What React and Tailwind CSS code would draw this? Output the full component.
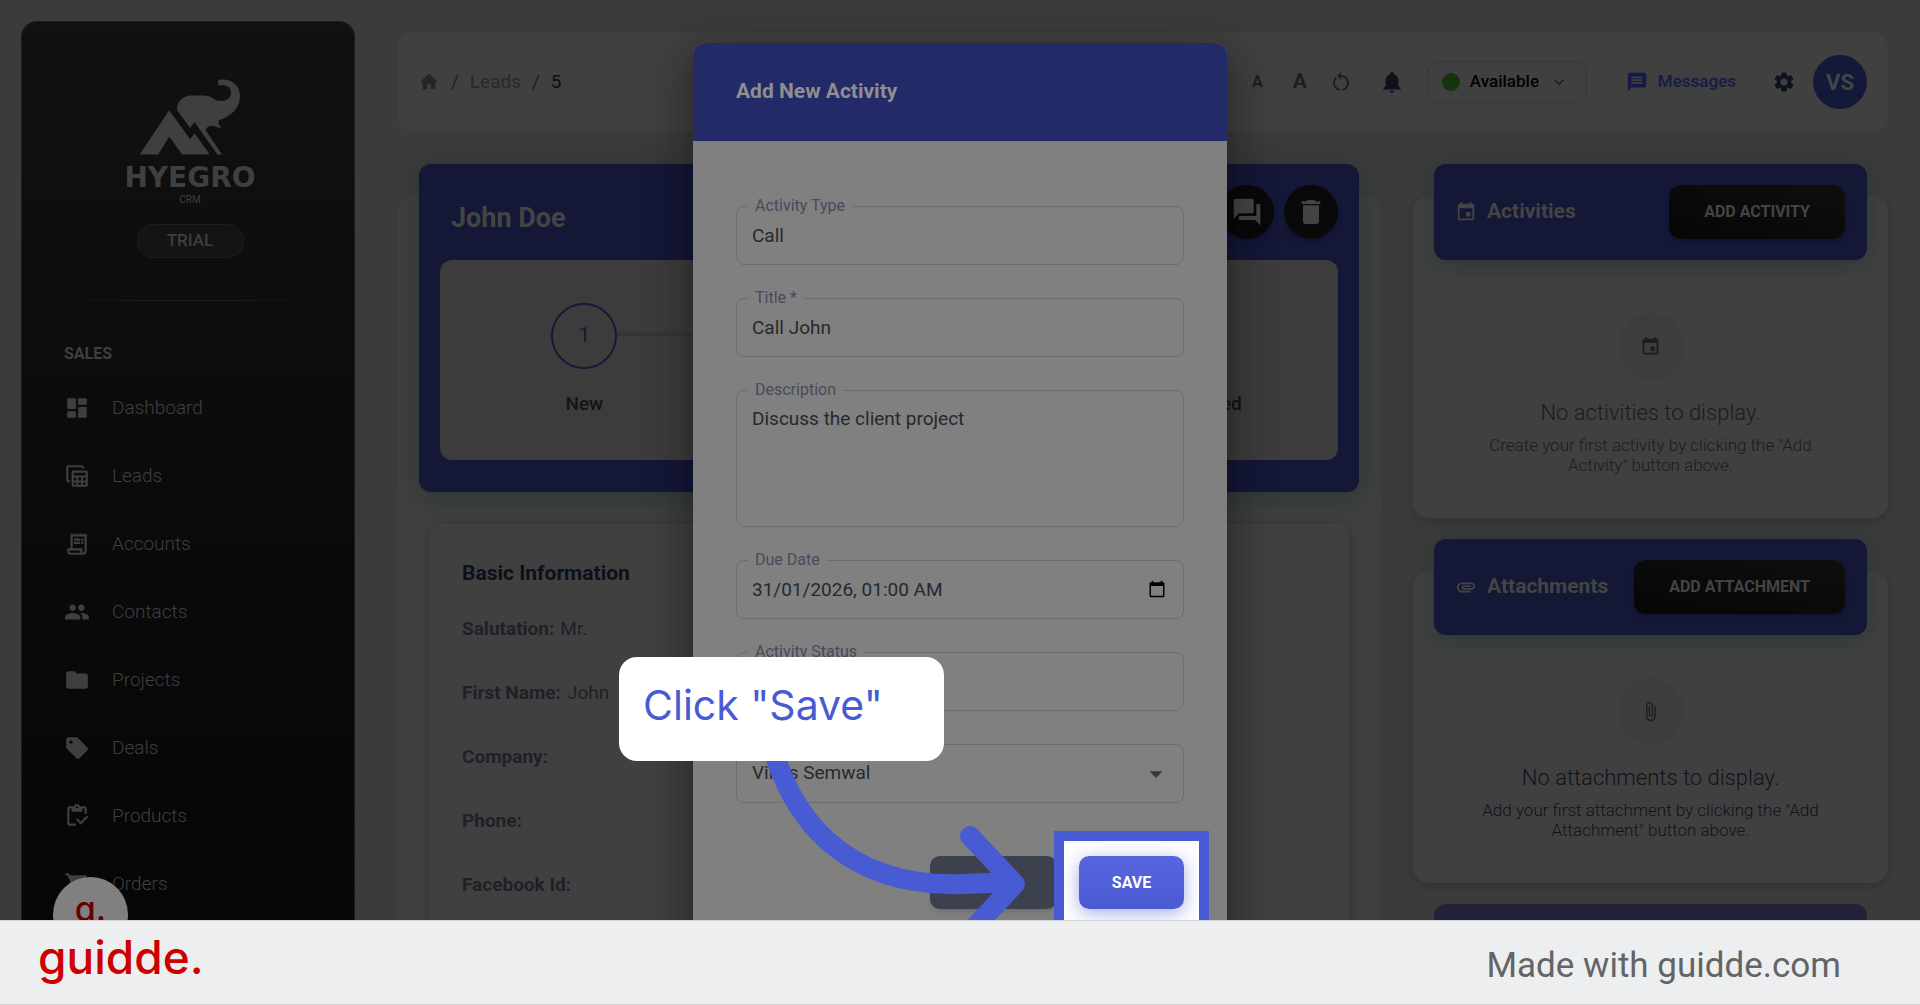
import {
  MdArrowDropDown,
  MdAttachFile,
  MdAttachment,
  MdCalendarToday,
  MdDelete,
  MdEvent,
  MdFolder,
  MdForum,
  MdKeyboardArrowDown,
  MdMessage,
  MdNotifications,
  MdOutlineInventory,
  MdOutlineReceiptLong,
  MdPeople,
  MdRestartAlt,
  MdSell,
  MdSettings,
  MdShoppingCart,
} from 'react-icons/md';

function DashboardIcon({ className }) {
  return (
    <svg viewBox="0 0 24 24" fill="currentColor" className={className}>
      <rect x="3" y="3" width="8" height="10" rx="1" />
      <rect x="3" y="15" width="8" height="6" rx="1" />
      <rect x="13" y="3" width="8" height="6" rx="1" />
      <rect x="13" y="11" width="8" height="10" rx="1" />
    </svg>
  );
}

function LeadsIcon({ className }) {
  return (
    <svg viewBox="0 0 24 24" fill="none" stroke="currentColor" className={className}>
      <path d="M17.500 5V4a1 1 0 0 0-1-1H4a1 1 0 0 0-1 1v12a1 1 0 0 0 1 1h1.500" strokeWidth="2" />
      <rect x="8" y="8" width="13" height="13" rx="1" strokeWidth="2" />
      <path d="M8 12.500h13M8 17h13M12.300 12v9M16.700 12v9" strokeWidth="1.800" />
    </svg>
  );
}

function HomeIcon({ className }) {
  return (
    <svg viewBox="0 0 24 24" fill="currentColor" className={className}>
      <path d="M10 19v-5h4v5c0 .55.45 1 1 1h3c.55 0 1-.45 1-1v-7h1.700c.46 0 .68-.57.33-.87L12.670 3.600c-.38-.34-.96-.34-1.340 0l-8.360 7.530c-.34.3-.13.87.33.87H5v7c0 .55.45 1 1 1h3c.55 0 1-.45 1-1z" />
    </svg>
  );
}

function ElephantLogo() {
  return (
    <svg viewBox="150 55 310 234" fill="currentColor" className="h-[78px] w-[103px]" aria-hidden="true">
      <path d="M152 285 L241 152 L304 239 L317 221 L363 285 H280 L241 231 L208 285 Z" />
      <path d="M264 150 C264 126 282 108 306 107 H345 C366 107 372 118 386 122 C408 127 427 118 427 98 C427 80 412 74 388 77 V60 C430 54 454 78 454 108 C454 146 430 168 390 182 C387 190 391 197 398 205 C385 204 380 199 370 198 C360 198 353 203 350 211 L400 285 H386 L317 187 L304 205 Z" />
    </svg>
  );
}

const navItems = [
  { label: 'Dashboard', icon: DashboardIcon },
  { label: 'Leads', icon: LeadsIcon },
  { label: 'Accounts', icon: MdOutlineReceiptLong },
  { label: 'Contacts', icon: MdPeople },
  { label: 'Projects', icon: MdFolder },
  { label: 'Deals', icon: MdSell },
  { label: 'Products', icon: MdOutlineInventory },
  { label: 'Orders', icon: MdShoppingCart },
];

const steps = ['New', 'Contacted', 'Unqualified'];

const leadDetails = [
  { label: 'Salutation:', value: 'Mr.' },
  { label: 'First Name:', value: 'John' },
  { label: 'Company:', value: '' },
  { label: 'Phone:', value: '' },
  { label: 'Facebook Id:', value: '' },
];

function Sidebar() {
  return (
    <aside className="mt-[21px] ml-[21px] w-[334px] shrink-0 rounded-t-2xl border border-b-0 border-[#1b1b1c] bg-linear-to-b from-[#111112] to-[#060606] text-[#3f3f3f]">
      <div className="flex flex-col items-center pt-14 pl-1">
        <ElephantLogo />
        <p className="mt-2.5 font-['DejaVu_Sans',sans-serif] text-[28px] leading-6 font-bold">HYEGRO</p>
        <p className="mt-1 text-[10px] leading-3">CRM</p>
        <span className="mt-[18px] flex h-[34px] w-[107px] items-center justify-center rounded-full border border-[#1e1e1e] bg-[#141414] text-[17px] font-medium">
          TRIAL
        </span>
      </div>
      <hr className="mx-5 mt-[42px] h-px border-0 bg-linear-to-r from-transparent via-[#202020] to-transparent" />
      <h2 className="mt-[41px] ml-[42px] text-base leading-6 font-bold">SALES</h2>
      <nav className="mt-2">
        {navItems.map(({ label, icon: Icon }) => (
          <a key={label} href="#" className="flex h-17 items-center gap-[22px] pl-[42px] text-[19px] font-light">
            <Icon className="size-[26px]" />
            {label}
          </a>
        ))}
      </nav>
    </aside>
  );
}

function TopBar() {
  return (
    <header className="flex h-25 shrink-0 items-center justify-between rounded-2xl bg-[#404040] px-[21px] text-[#1e1e20]">
      <nav aria-label="Breadcrumb" className="flex items-center gap-[11px] text-[19px]">
        <a href="#" aria-label="Home" className="text-[#24242c]">
          <HomeIcon className="size-[22px]" />
        </a>
        <span>/</span>
        <a href="#" className="text-[#28282e]">Leads</a>
        <span>/</span>
        <span className="text-[#0b0e18]">5</span>
      </nav>
      <div className="flex items-center">
        <button type="button" className="text-base font-bold">A</button>
        <button type="button" className="ml-[30px] text-[21px] font-bold">A</button>
        <button type="button" aria-label="Reset" className="ml-[22px]">
          <MdRestartAlt className="size-6" />
        </button>
        <button type="button" aria-label="Notifications" className="ml-[26px] text-[#0e121d]">
          <MdNotifications className="size-[26px]" />
        </button>
        <button
          type="button"
          className="ml-[22px] flex h-[42px] w-40 items-center rounded-xl border border-[#373737] pl-3.5 text-[17px] font-medium text-black"
        >
          <span className="mr-2.5 size-[18px] rounded-full bg-[#15330f]" />
          Available
          <MdKeyboardArrowDown className="ml-2.5 size-5 text-[#1e1e20]" />
        </button>
        <span className="ml-3 h-5 w-px bg-[#3c3c3c]" />
        <a href="#" className="ml-[26px] flex items-center gap-2.5 text-[17px] font-medium text-[#161a45]">
          <MdMessage className="size-[22px]" />
          Messages
        </a>
        <button type="button" aria-label="Settings" className="ml-9 text-[#0e121d]">
          <MdSettings className="size-6" />
        </button>
        <span className="ml-[17px] flex size-[54px] items-center justify-center rounded-full bg-[#141839] text-[22px] font-bold text-[#454545]">
          VS
        </span>
      </div>
    </header>
  );
}

function LeadHeader() {
  return (
    <div className="-mt-8 mx-[22px] rounded-xl bg-[#141736] px-[21px] pb-8 shadow-[0_4px_20px_rgba(30,50,50,0.6)]">
      <div className="flex h-24 items-center justify-between pl-[11px] text-[#444444]">
        <h1 className="mt-3 text-[27px] font-bold">John Doe</h1>
        <div className="flex gap-2.5">
          <button type="button" aria-label="Comments" className="flex size-[54px] items-center justify-center rounded-full bg-[#090909] shadow-md">
            <MdForum className="size-8" />
          </button>
          <button type="button" aria-label="Delete" className="flex size-[54px] items-center justify-center rounded-full bg-[#090909] shadow-md">
            <MdDelete className="size-8" />
          </button>
        </div>
      </div>
      <div className="h-50 rounded-xl bg-[#3c3c3c] pt-[43px]">
        <ol className="-mx-2 grid grid-cols-3">
          {steps.map((step, i) => (
            <li key={step} className="relative flex flex-col items-center">
              {i > 0 && <span className="absolute top-[29px] right-[calc(50%+33px)] left-[calc(-50%+33px)] h-1 bg-[#363636]" />}
              <span className="flex size-[66px] items-center justify-center rounded-full border-2 border-[#141839] text-[21px] text-[#141839]">
                {i + 1}
              </span>
              <span className="mt-[21px] text-[19px] leading-7 font-medium text-[#141414]">{step}</span>
            </li>
          ))}
        </ol>
      </div>
    </div>
  );
}

function LeadInformation() {
  return (
    <section className="mx-8 mt-8 h-full rounded-xl bg-[#404040] px-[33px] pt-[33px] shadow-[0_2px_8px_rgba(0,0,0,0.25)]">
      <h2 className="text-[21px] leading-8 font-bold text-[#0c101b]">Basic Information</h2>
      <dl className="mt-2">
        {leadDetails.map(({ label, value }) => (
          <div key={label} className="flex h-16 items-center gap-1.5 text-[19px] text-[#1f2028]">
            <dt className="font-bold">{label}</dt>
            <dd>{value}</dd>
          </div>
        ))}
      </dl>
    </section>
  );
}

function SideCard({ title, icon: Icon, emptyIcon: EmptyIcon, action, heading, text, bodyClass }) {
  return (
    <section className="mt-[53px] shrink-0 rounded-2xl bg-[#404040] shadow-[0_4px_8px_rgba(0,0,0,0.15)] first:mt-0">
      <div className="-mt-8 mx-[21px] flex h-24 items-center justify-between rounded-xl bg-[#141736] pr-[22px] pl-[21px] text-[#444444] shadow-[0_4px_20px_rgba(30,50,50,0.6)]">
        <h2 className="flex items-center gap-2.5 text-[21px] font-bold">
          <Icon className="size-[22px]" />
          {title}
        </h2>
        <button
          type="button"
          className="h-[54px] rounded-xl bg-linear-to-bl from-[#0f0f10] to-[#060606] px-[35px] text-base font-bold shadow-md"
        >
          {action}
        </button>
      </div>
      <div className={bodyClass + ' flex flex-col items-center px-16 pb-[43px] text-center font-light'}>
        <span className="flex size-[66px] items-center justify-center rounded-full bg-[#3d3d3d] text-[#1c1c1c]">
          <EmptyIcon className="size-[21px]" />
        </span>
        <p className="mt-5 text-[22px] leading-7">{heading}</p>
        <p className="mt-2 text-[17px] leading-5">{text}</p>
      </div>
    </section>
  );
}

function Field({ id, label, children }) {
  return (
    <div className="relative flex">
      <label htmlFor={id} className="absolute -top-3 left-3 z-10 bg-[#808080] px-[7px] text-base leading-6 text-[#484a5c]">
        {label}
      </label>
      {children}
    </div>
  );
}

const inputClass =
  'h-[59px] w-full rounded-lg border border-[#6d6d6d] bg-transparent px-[15px] text-[19px] text-[#26292e] outline-none';

// callout bubble and arrow pointing at the save button
function ClickGuide() {
  return (
    <>
      <svg
        viewBox="0 0 300 200"
        fill="none"
        stroke="#485bd2"
        strokeWidth="20"
        strokeLinecap="round"
        strokeLinejoin="round"
        className="pointer-events-none absolute top-[697px] left-[57px] z-20 h-[200px] w-[300px]"
      >
        <path d="M22 6C40 70 88 149 215 144C232 143 248 142 264 144" />
        <path d="M220 96L265 144L220 192" />
      </svg>
      <div className="absolute top-[614px] -left-[74px] z-30 flex h-26 w-[325px] items-center rounded-[18px] bg-white px-6 pb-1.5 font-['Inter',sans-serif] text-[41px] text-[#485bd2]">
        Click "Save"
      </div>
    </>
  );
}

function ActivityDialog() {
  return (
    <div className="absolute inset-0 z-10 flex items-start justify-center pt-[43px]">
      <div
        role="dialog"
        aria-labelledby="dialog-title"
        className="relative w-[534px] rounded-xl bg-[#808080] shadow-[0_11px_15px_-7px_rgba(0,0,0,0.2),0_24px_38px_3px_rgba(0,0,0,0.14),0_9px_46px_8px_rgba(0,0,0,0.22)]"
      >
        <h2 id="dialog-title" className="flex h-[98px] items-center rounded-t-xl bg-[#232a68] px-[43px] text-[21px] font-bold text-[#8f8f8f]">
          Add New Activity
        </h2>
        <form className="flex flex-col gap-[33px] px-[43px] pt-[65px] pb-12">
          <Field id="type" label="Activity Type">
            <input id="type" defaultValue="Call" className={inputClass} />
          </Field>
          <Field id="title" label="Title *">
            <input id="title" defaultValue="Call John" className={inputClass} />
          </Field>
          <Field id="description" label="Description">
            <textarea
              id="description"
              defaultValue="Discuss the client project"
              className="h-[137px] w-full resize-none rounded-lg border border-[#6d6d6d] bg-transparent px-[15px] pt-3.5 text-[19px] text-[#26292e] outline-none"
            />
          </Field>
          <Field id="due" label="Due Date">
            <input id="due" defaultValue="31/01/2026, 01:00 AM" className={inputClass} />
            <button type="button" aria-label="Pick a date" className="absolute top-5 right-[18px] text-black">
              <MdCalendarToday className="size-[18px]" />
            </button>
          </Field>
          <Field id="status" label="Activity Status">
            <input id="status" className={inputClass} />
          </Field>
          <Field id="owner" label="Assigned To">
            <select id="owner" className={inputClass + ' appearance-none'}>
              <option>Vikas Semwal</option>
            </select>
            <MdArrowDropDown className="pointer-events-none absolute top-3.5 right-3 size-8 text-[#3a3a3a]" />
          </Field>
          <div className="mt-5 flex justify-end gap-[22px]">
            <button type="button" className="h-[53px] w-[127px] rounded-[10px] bg-[#3d404d] text-base font-medium text-[#808080] shadow-md">
              CANCEL
            </button>
            <div className="relative">
              <span className="absolute -inset-[25px] border-10 border-[#485bd2] bg-white" />
              <button
                type="submit"
                className="relative h-[53px] w-[105px] rounded-[10px] bg-linear-to-b from-[#5766df] to-[#4a5ad2] text-base font-bold text-white shadow-[0_4px_18px_rgba(72,91,210,0.5)]"
              >
                SAVE
              </button>
            </div>
          </div>
        </form>
        <ClickGuide />
      </div>
    </div>
  );
}

export default function App() {
  return (
    <div className="flex h-screen flex-col bg-[#3b3b3b] font-['Roboto',sans-serif]">
      <main className="relative flex min-h-0 flex-1 overflow-hidden">
        <Sidebar />
        <div className="ml-[42px] flex min-w-0 flex-1 flex-col pt-8 pr-8">
          <TopBar />
          <div className="mt-16 grid flex-1 grid-cols-[984fr_475fr] gap-8">
            <div className="rounded-2xl bg-[#3f3f3f]">
              <LeadHeader />
              <LeadInformation />
            </div>
            <div className="flex flex-col">
              <SideCard
                title="Activities"
                icon={MdEvent}
                emptyIcon={MdEvent}
                action="ADD ACTIVITY"
                heading="No activities to display."
                text={'Create your first activity by clicking the "Add Activity" button above.'}
                bodyClass="mt-[53px] text-[#1c1c1c]"
              />
              <SideCard
                title="Attachments"
                icon={MdAttachment}
                emptyIcon={MdAttachFile}
                action="ADD ATTACHMENT"
                heading="No attachments to display."
                text={'Add your first attachment by clicking the "Add Attachment" button above.'}
                bodyClass="mt-[43px] text-[#10131c]"
              />
              <div className="mx-[21px] mt-[21px] h-24 shrink-0 rounded-xl bg-[#222338]" />
            </div>
          </div>
        </div>
        <ActivityDialog />
        <button
          type="button"
          className="absolute -bottom-8 left-[53px] z-10 flex size-[75px] items-start justify-center rounded-full bg-[#808080] pt-4 font-['Inter',sans-serif] text-[34px] leading-8 font-medium text-[#660000]"
        >
          g.
        </button>
      </main>
      <footer className="z-20 flex h-[85px] items-center justify-between border-y border-y-[#d4d4d6] bg-[#edeef0] pr-[79px] pl-[38px]">
        <a href="#" className="pb-3 font-['Inter',sans-serif] text-[46px] leading-[50px] font-medium text-[#cc0000]">guidde.</a>
        <p className="pt-2 text-[35px] text-[#636466]">Made with guidde.com</p>
      </footer>
    </div>
  );
}
